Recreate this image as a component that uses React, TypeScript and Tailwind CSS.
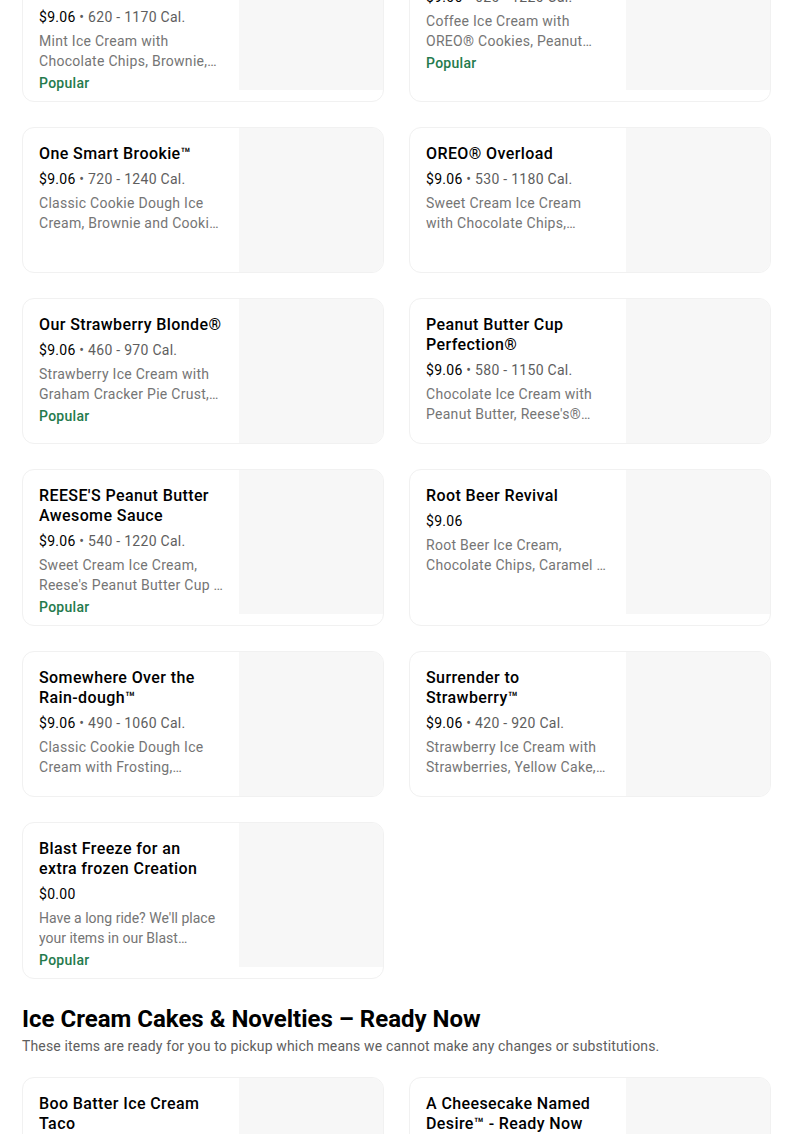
import React from "react";

type Item = {
  name: string;
  price: string;
  cal?: string;
  desc: string;
  popular?: boolean;
  tightDesc?: boolean;
};

const creations: Item[] = [
  {
    name: "Mint Mint Chocolate Chocolate Chip",
    price: "$9.06",
    cal: "620 - 1170 Cal.",
    desc: "Mint Ice Cream with Chocolate Chips, Brownie, Fudge",
    popular: true,
  },
  {
    name: "Mud Pie Mojo®",
    price: "$9.06",
    cal: "620 - 1220 Cal.",
    desc: "Coffee Ice Cream with OREO® Cookies, Peanut Butter, Roasted Almonds & Fudge",
    popular: true,
  },
  {
    name: "One Smart Brookie™",
    price: "$9.06",
    cal: "720 - 1240 Cal.",
    desc: "Classic Cookie Dough Ice Cream, Brownie and Cookie Dough, Fudge & Whipped Topping",
  },
  {
    name: "OREO® Overload",
    price: "$9.06",
    cal: "530 - 1180 Cal.",
    desc: "Sweet Cream Ice Cream with Chocolate Chips, OREO® Cookies & Fudge",
  },
  {
    name: "Our Strawberry Blonde®",
    price: "$9.06",
    cal: "460 - 970 Cal.",
    desc: "Strawberry Ice Cream with Graham Cracker Pie Crust, Strawberries & Caramel",
    popular: true,
  },
  {
    name: "Peanut Butter Cup Perfection®",
    price: "$9.06",
    cal: "580 - 1150 Cal.",
    desc: "Chocolate Ice Cream with Peanut Butter, Reese's® Peanut Butter Cups & Fudge",
  },
  {
    name: "REESE'S Peanut Butter Awesome Sauce",
    price: "$9.06",
    cal: "540 - 1220 Cal.",
    desc: "Sweet Cream Ice Cream, Reese's Peanut Butter Cup & Peanut Butter Sauce",
    popular: true,
  },
  {
    name: "Root Beer Revival",
    price: "$9.06",
    desc: "Root Beer Ice Cream, Chocolate Chips, Caramel & Whipped Topping",
  },
  {
    name: "Somewhere Over the Rain-dough™",
    price: "$9.06",
    cal: "490 - 1060 Cal.",
    desc: "Classic Cookie Dough Ice Cream with Frosting, Sprinkles & Cookie Dough",
  },
  {
    name: "Surrender to Strawberry™",
    price: "$9.06",
    cal: "420 - 920 Cal.",
    desc: "Strawberry Ice Cream with Strawberries, Yellow Cake, Graham Cracker Pie Crust",
  },
  {
    name: "Blast Freeze for an extra\u00a0frozen Creation",
    price: "$0.00",
    desc: "Have a long ride? We'll place your items in our Blast Freezer so they stay frozen",
    popular: true,
    tightDesc: true,
  },
];

const readyNow: Item[] = [
  {
    name: "Boo Batter Ice Cream Taco",
    price: "$6.49",
    desc: "Cake Batter Ice Cream in a waffle taco shell dipped in chocolate",
  },
  {
    name: "A Cheesecake Named Desire™ - Ready Now",
    price: "$49.99",
    desc: "Cheesecake Ice Cream with Graham Cracker Pie Crust and Strawberries",
  },
];

function Card({ item }: { item: Item }) {
  return (
    <div className="flex overflow-hidden rounded-xl border border-[#f1f1f1] bg-white">
      <div className="min-w-0 flex-1 pb-2 pl-4 pr-4 pt-4">
        <div className="text-[16px] font-medium leading-5 tracking-[0.025em] text-black">{item.name}</div>
        <div className="mt-[5px] text-[14px] leading-5 tracking-[0.02em] text-[#5e5e5e]">
          <span className="text-black">{item.price}</span>
          {item.cal && <span> • {item.cal}</span>}
        </div>
        <div
          className={
            item.tightDesc
              ? "mt-1 line-clamp-2 text-[14px] leading-5 tracking-normal text-[#757575]"
              : "mt-1 line-clamp-2 text-[14px] leading-5 tracking-[0.02em] text-[#757575]"
          }
        >
          {item.desc}
        </div>
        {item.popular && (
          <div className="mt-[2px] text-[14px] font-medium leading-5 tracking-[0.02em] text-[#247a4c]">
            Popular
          </div>
        )}
      </div>
      <div className="h-[144px] w-[144px] shrink-0 bg-[#f7f7f7]" />
    </div>
  );
}

export default function App() {
  return (
    <div
      className="min-h-screen bg-white pl-[22px] text-black"
      style={{ fontFamily: "Roboto, 'Liberation Sans', sans-serif" }}
    >
      <div className="-mt-[55px] grid w-[749px] grid-cols-2 gap-x-[25px] gap-y-[25px]">
        {creations.map((item) => (
          <Card key={item.name} item={item} />
        ))}
      </div>

      <h2 className="mt-[24px] text-[24px] font-bold leading-8 text-black">
        Ice Cream Cakes &amp; Novelties – Ready Now
      </h2>
      <p className="mt-px text-[14px] leading-5 tracking-[0.011em] text-[#5e5e5e]">
        These items are ready for you to pickup which means we cannot make any changes or substitutions.
      </p>

      <div className="mt-[21px] grid w-[749px] grid-cols-2 gap-x-[25px] gap-y-[25px] pb-10">
        {readyNow.map((item) => (
          <Card key={item.name} item={item} />
        ))}
      </div>
    </div>
  );
}
